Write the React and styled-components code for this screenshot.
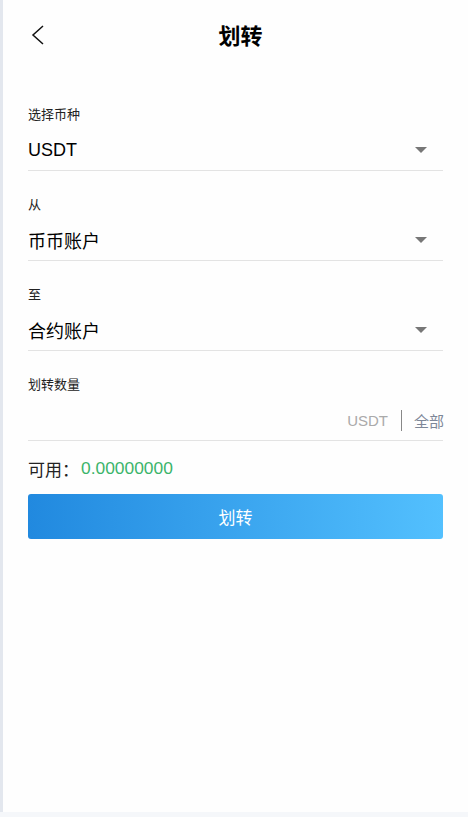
import React from 'react';
import styled, { createGlobalStyle } from 'styled-components';

const Global = createGlobalStyle`
  html, body { margin: 0; padding: 0; background: #f5f7fa; }
  body { font-family: "Liberation Sans", Arial, "Noto Sans CJK SC", sans-serif; }
`;

const Page = styled.div`
  width: 465px;
  height: 812px;
  background: #fefefe;
  border-left: 3px solid #e3e7ee;
`;

const Header = styled.div`
  height: 68px;
  padding-left: 10px;
  display: flex;
  align-items: center;
  justify-content: center;
  position: relative;
`;

const Back = styled.div`
  position: absolute;
  left: 25px;
  top: 24px;
  width: 20px;
  height: 22px;
  display: flex;
`;

const Title = styled.h1`
  margin: 0;
  font-size: 22px;
  font-weight: 700;
  color: #000;
  font-family: "Noto Sans CJK SC", sans-serif;
`;

const Form = styled.div`
  padding: 13px 25px 0;
`;

const Section = styled.div`
  padding-top: 23px;
  border-bottom: 1px solid #e3e3e3;
`;

const Label = styled.div`
  height: 20px;
  line-height: 20px;
  margin-bottom: 6px;
  font-size: 13px;
  color: #222;
  font-family: "Noto Sans CJK SC", sans-serif;
`;

const Row = styled.div`
  height: 40px;
  display: flex;
  align-items: center;
  justify-content: ${p => (p.end ? 'flex-end' : 'space-between')};
`;

const Value = styled.span`
  font-size: 18px;
  color: #000;
  font-family: "Liberation Sans", "Noto Sans CJK SC", sans-serif;
`;

const Caret = styled.span`
  width: 0;
  height: 0;
  margin-right: 16px;
  border-left: 6px solid transparent;
  border-right: 6px solid transparent;
  border-top: 6px solid #777;
`;

const Unit = styled.span`
  font-size: 15px;
  color: #aaa;
`;

const Sep = styled.span`
  width: 1px;
  height: 21px;
  background: #888;
  margin: 0 12px 0 13px;
`;

const All = styled.span`
  font-size: 15px;
  color: #7d8798;
  margin-right: -1px;
  font-family: "Noto Sans CJK SC", sans-serif;
`;

const Avail = styled.div`
  margin-top: 16px;
  height: 22px;
  display: flex;
  align-items: center;
  font-size: 17px;
  color: #222;
  font-family: "Noto Sans CJK SC", sans-serif;
`;

const Green = styled.span`
  color: #3bb46a;
  margin-left: 2px;
  font-family: "Liberation Sans", sans-serif;
  font-size: 17.4px;
`;

const Button = styled.button`
  margin-top: 15px;
  width: 100%;
  height: 45px;
  border: none;
  border-radius: 3px;
  background: linear-gradient(90deg, #2189df, #53c0fe);
  color: #fff;
  font-size: 17px;
  font-family: "Noto Sans CJK SC", sans-serif;
`;

const fields = [
  { label: '选择币种', value: 'USDT' },
  { label: '从', value: '币币账户' },
  { label: '至', value: '合约账户' },
];

export default function App() {
  return (
    <Page>
      <Global />
      <Header>
        <Back>
          <svg width="20" height="22" viewBox="0 0 20 22">
            <polyline points="15,2 5,11 15,20" fill="none" stroke="#111" strokeWidth="1.5" />
          </svg>
        </Back>
        <Title>划转</Title>
      </Header>
      <Form>
        {fields.map(f => (
          <Section key={f.label}>
            <Label>{f.label}</Label>
            <Row>
              <Value>{f.value}</Value>
              <Caret />
            </Row>
          </Section>
        ))}
        <Section>
          <Label>划转数量</Label>
          <Row end>
            <Unit>USDT</Unit>
            <Sep />
            <All>全部</All>
          </Row>
        </Section>
        <Avail>
          可用：<Green>0.00000000</Green>
        </Avail>
        <Button>划转</Button>
      </Form>
    </Page>
  );
}
